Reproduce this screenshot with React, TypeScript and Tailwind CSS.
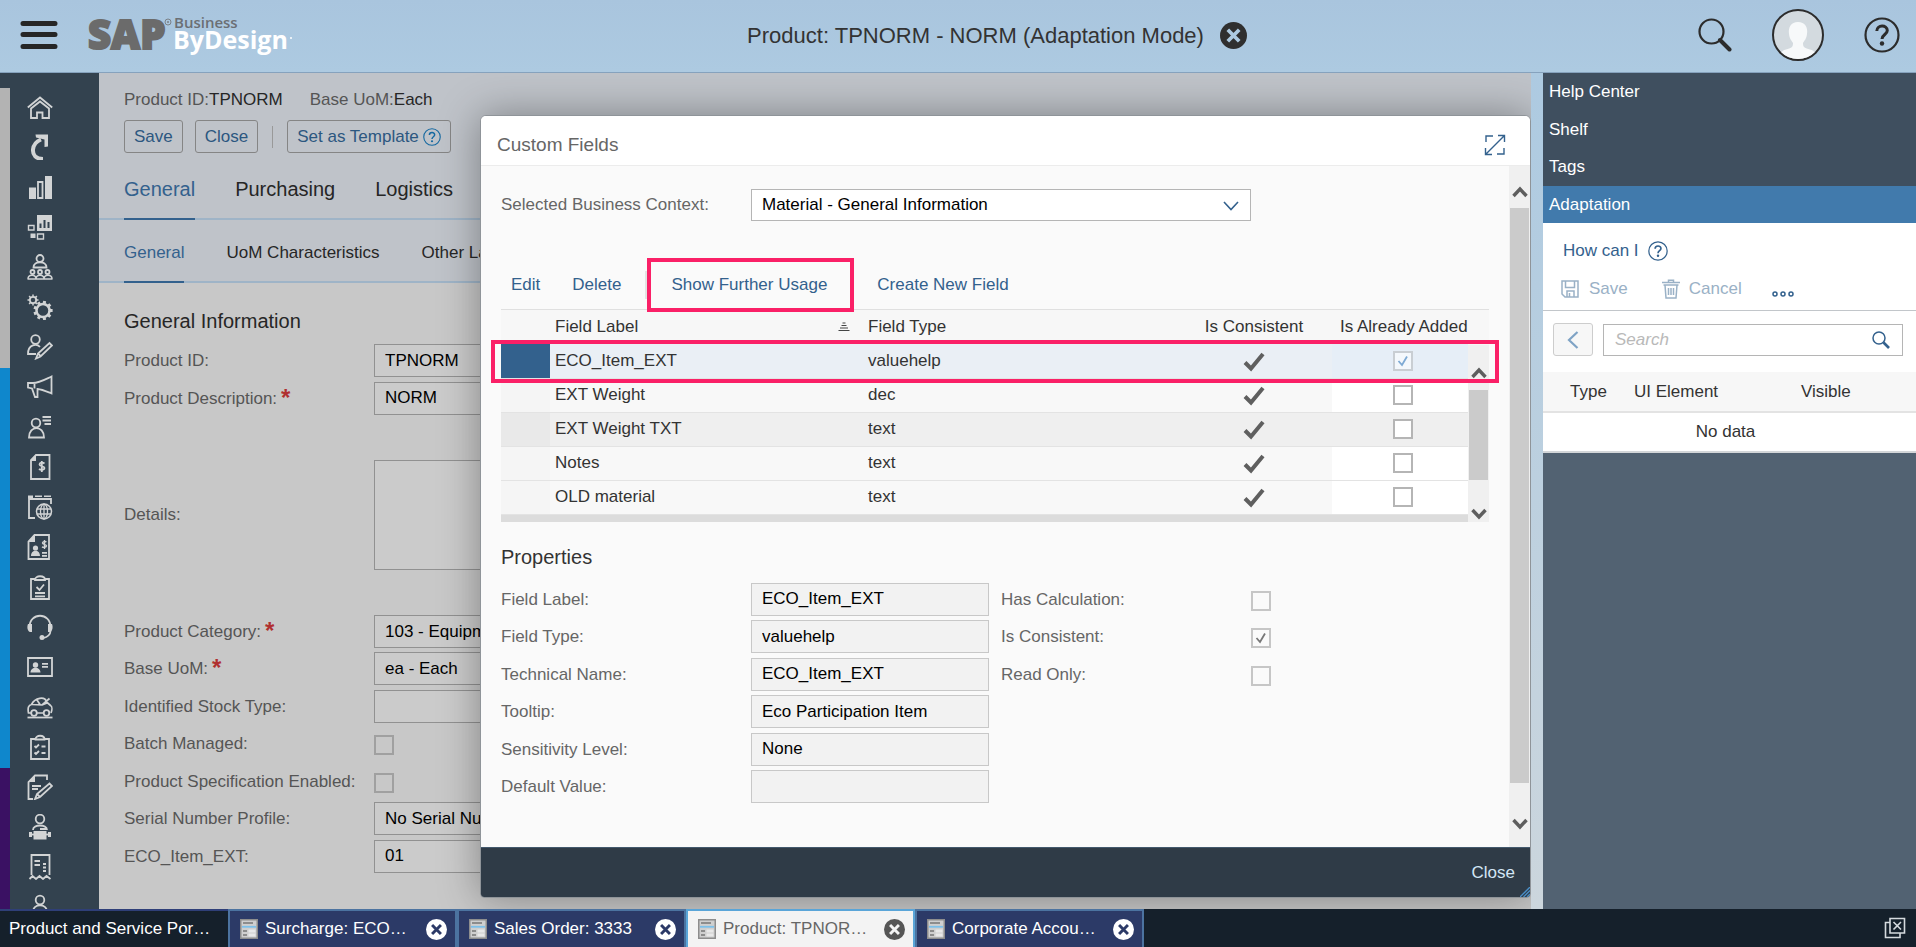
import React from "react";

type IconProps = { children: React.ReactNode; className?: string; box?: string };

function Svg({ children, className = "", box = "0 0 26 26" }: IconProps) {
  return (
    <svg viewBox={box} className={className} fill="none" stroke="currentColor" strokeWidth={1.8} aria-hidden="true">
      {children}
    </svg>
  );
}

const F = { fill: "currentColor", stroke: "none" };

const gear = (cx: number, cy: number, r: number, n: number, tooth: number) =>
  Array.from({ length: n }, (_, i) => {
    const a = (i * 2 * Math.PI) / n;
    return `M${cx + Math.cos(a) * r} ${cy + Math.sin(a) * r}L${cx + Math.cos(a) * (r + tooth)} ${cy + Math.sin(a) * (r + tooth)}`;
  }).join("");

const railIcons: { name: string; art: React.ReactNode }[] = [
  { name: "Home", art: <><path d="M.8 13.5 13 3.5l12.2 10" /><path d="M4 14.5V24h6v-5.5h5.500V24H22v-9.500L13 7.500Z" /></> },
  { name: "Recent", art: <><path d="M16 25C9 25 5.500 21 6 15.500 6.500 11 9 7.500 14 5.500" strokeWidth={4} /><path d="M8.500.500H21v12l-3.500.500V5.500L9 3.500Z" {...F} /></> },
  { name: "Analysis", art: <><path d="M2 13.500h7V25H2ZM18 2h7v23h-7Z" {...F} /><path d="M11 8h4.500v16H11Z" /></> },
  { name: "Dashboards", art: <><path fillRule="evenodd" d="M10 1h15v16H10ZM12.500 9.500v4.500h2V9.500ZM16.500 6v8h2V6ZM20.500 8v6h2V8Z" {...F} /><path d="M1.500 11.500h5.500v4.500H1.500ZM10.500 20h6v5h-6Z" strokeWidth={1.400} /><path d="M3.500 19.500h5v4.500h-5Z" {...F} /></> },
  { name: "Team", art: <><circle cx="13" cy="4.500" r="3.500" /><path d="M6.500 13.500c0-7 13-7 13 0Z" /><circle cx="5.500" cy="18" r="2" /><circle cx="13" cy="18" r="2" /><circle cx="20.500" cy="18" r="2" /><path d="M1 25c0-5 8-5 8 0M9 25c0-5 8-5 8 0M17 25c0-5 8-5 8 0M.500 25h25" strokeWidth={1.500} /></> },
  { name: "Settings", art: <><circle cx="16" cy="16.500" r="6.500" strokeWidth={2.500} /><path d={gear(16, 16.5, 7, 9, 2.6)} strokeWidth={3} /><circle cx="6" cy="6" r="3.200" /><path d={gear(6, 6, 3.5, 8, 2)} strokeWidth={1.500} /></> },
  { name: "Administration", art: <><circle cx="8.500" cy="5.500" r="4.300" /><path d="M13 13c-3-3.500-12-3-12 7h8" /><path d="m9 24.500 2-5L22.500 9l2.500 2.500-11.500 11ZM11 19.500l3 3" /></> },
  { name: "Marketing", art: <path d="M1 9h5c6 0 12-3.500 18.500-6.500v17c-5-2-9-4-14-4.500V23H8L5 14.500 1 13.500ZM7.500 9v5.500" /> },
  { name: "Contacts", art: <><circle cx="9" cy="9" r="4.300" /><path d="M2 23.500c0-12.500 15-12.500 15 0Z" /><path d="M15.500 3H24M15.500 6.500H24M17.500 10H24" /></> },
  { name: "Sales", art: <><path d="M9 1h13.500v24H4V6Z" /><path d="M9 .500V7H3.500Z" {...F} /><path d="M17.500 9.500c-2-1.500-5-1-5 1s5 1.500 5 3.500-3.500 2.500-5.500 1M14.800 7v11" /></> },
  { name: "Web Orders", art: <><path d="M8 24H2V5h22v5" /><path d="M1 1.500h5v3H1ZM8 1.500h7v1.500H8ZM17 1.500h7v1.500h-7Z" {...F} /><circle cx="17" cy="17.500" r="7.500" strokeWidth={1.500} /><ellipse cx="17" cy="17.500" rx="3.500" ry="7.500" strokeWidth={1.300} /><path d="M10 15h14M10 20h14M17 10v15" strokeWidth={1.300} /></> },
  { name: "Accounts", art: <><path d="M7.500 1H22v24H1.500V7.500Z" /><path d="M8 .500V8H1Z" {...F} /><circle cx="8.500" cy="14" r="2.600" {...F} /><path d="M4 22c0-7 9-7 9 0ZM15 18h5v1.800h-5ZM15 21h5v1.800h-5Z" {...F} /><path d="M19.500 8c-1.500-1-4-.500-4 1s4 1.200 4 2.800-3 2-4.500 1M17.500 6v9" strokeWidth={1.400} /></> },
  { name: "Tasks", art: <><path d="M9 5H4v20h18V5h-5" /><path d="M8 6c0-5 10-5 10 0Z" /><path d="m9.500 13 3 3 4.500-5.500M8 19h10M8 22.300h10" /></> },
  { name: "Service Desk", art: <><path d="M2.500 13C2.500-2 23.500-2 23.500 13v4c0 3-3 6-7 7" /><path d="M1 10h4v8H3c-3-1-3-6-2-8ZM21 10h4c1 2 1 7-2 8h-2Z" {...F} /><circle cx="15" cy="23.500" r="2.500" {...F} /></> },
  { name: "Employees", art: <><path d="M1 4h24v18H1Z" /><circle cx="8.500" cy="11" r="2.700" {...F} /><path d="M3.500 18.500c0-6.500 10-6.500 10 0ZM15 9h6v1.800h-6ZM15 12h6v1.800h-6Z" {...F} /></> },
  { name: "Vehicles", art: <><path d="M4 19H1.500c-1-5 0-8 3-8.500C8 3.500 18 2 19.500 8l4 3.500c2 1 1.500 5 .500 7.500M10 19h6.500M5 10.500l10 .500 7.500-6.500M10 6l3 4.500M15 11l5-2" strokeWidth={1.700} /><circle cx="7" cy="19" r="2.800" /><circle cx="19.500" cy="19" r="2.800" /><path d="M.500 23.500h25" /></> },
  { name: "Checklist", art: <><path d="M9 5H4v20h18V5h-5" /><path d="M8.500 5.500c0-5 9-5 9 0Z" /><path d="m7.500 12 1.500 1.500 3-3M7.500 18.500 9 20l3-3M14.500 12.500h4M14.500 19h4" /></> },
  { name: "Contracts", art: <><path d="M6 25H1.500V8l6.500-6.500h12V6" /><path d="M8 1v7H1Z" {...F} /><path d="M5 12h9M5 15h6" /><path d="m8 25 2-5L22.500 9.500 25 12 13 23ZM10 20l3 3" /></> },
  { name: "Speaker", art: <><circle cx="13" cy="5" r="4.300" /><path d="M6 16c0-6 14-6 14 0M13 15h7" /><path d="M6.500 17h13v8.500h-13ZM2 18h3v5H2ZM21 18h3v5h-3Z" {...F} /><path d="M3 20.500h20" /></> },
  { name: "Receipts", art: <><path d="M4.500 21V1h18v20" /><path d="m2.500 25 3-3 3.500 3 3.500-3 3.500 3 3.500-3 4 3" /><path d="M7.500 7H13M7.500 11H13M16 10h3M16 13.500h3M16 17h3" /></> },
  { name: "Personal", art: <><circle cx="13" cy="6" r="4.300" /><path d="M6 18c0-9 14-9 14 0Z" /></> },
];

function HelpGlyph({ className = "" }: { className?: string }) {
  return (
    <svg viewBox="0 0 36 36" className={className} fill="none" stroke="currentColor" strokeWidth={2.2} aria-hidden="true">
      <circle cx="18" cy="18" r="16.500" />
      <path d="M12.800 14c0-6.500 10.500-6.500 10.500-.500 0 4-5.300 4-5.300 8.500" strokeWidth={3} />
      <circle cx="18" cy="26.500" r="2.200" {...F} />
    </svg>
  );
}

function CloseGlyph({ className = "", cross }: { className?: string; cross: string }) {
  return (
    <svg viewBox="0 0 26 26" className={className} aria-hidden="true">
      <circle cx="13" cy="13" r="13" fill="currentColor" />
      <path d="m7.500 7.500 11 11M18.500 7.500l-11 11" stroke={cross} strokeWidth={3.6} />
    </svg>
  );
}

function Chevron({ up = false }: { up?: boolean }) {
  return (
    <svg viewBox="0 0 16 12" className="h-3 w-4" fill="none" stroke="#5e5e5e" strokeWidth={3.4} aria-hidden="true">
      <path d={up ? "M1.500 10 8 3l6.500 7" : "M1.500 2 8 9l6.500-7"} />
    </svg>
  );
}

function Check({ id, label, checked = false, tone, mark = "#777" }: { id?: string; label?: string; checked?: boolean; tone: string; mark?: string }) {
  return (
    <span className="inline-grid size-5 place-items-center align-middle">
      <input id={id} aria-label={label} type="checkbox" defaultChecked={checked} className={"col-start-1 row-start-1 size-5 appearance-none border-2 " + tone} />
      {checked && (
        <svg viewBox="0 0 12 12" className="pointer-events-none col-start-1 row-start-1 size-3" fill="none" stroke={mark} strokeWidth={1.8} aria-hidden="true">
          <path d="m1.500 6 3.500 4 5-8.500" />
        </svg>
      )}
    </span>
  );
}

function Header() {
  return (
    <header className="flex h-[73px] shrink-0 items-center border-b border-[#86a2bd] bg-linear-to-b from-[#a9c5de] to-[#adcae1] pr-4 pb-0.5 pl-5">
      <button aria-label="Menu" className="mr-[30px]">
        <svg viewBox="0 0 38 28" className="h-7 w-[38px]" stroke="#262626" strokeWidth={5} strokeLinecap="round">
          <path d="M3 2.500h32M3 13.500h32M3 25.500h32" />
        </svg>
      </button>
      <svg viewBox="0 0 208 44" className="h-11 w-[208px] overflow-visible" role="img" aria-label="SAP Business ByDesign">
        <text x="0" y="36" fontFamily="Open Sans" fontWeight="800" fontSize="40" fill="#6b6b6b" stroke="#6b6b6b" strokeWidth="2">SAP</text>
        <circle cx="80" cy="9" r="3" fill="none" stroke="#7b8187" />
        <circle cx="80" cy="9" r="1" fill="#7b8187" />
        <text x="86" y="15" fontFamily="Open Sans" fontWeight="600" fontSize="15" fill="#6b6f74">Business</text>
        <text x="85" y="36" fontFamily="Open Sans" fontWeight="700" fontSize="25" fill="#fff">ByDesign</text>
        <circle cx="203" cy="25" r="1" fill="#fff" />
      </svg>
      <div className="flex flex-1 items-center justify-center gap-4">
        <h1 className="text-[22px] text-[#333]">Product: TPNORM - NORM (Adaptation Mode)</h1>
        <button aria-label="Leave adaptation mode"><CloseGlyph className="size-[27px] text-[#2f2f2f]" cross="#adcae1" /></button>
      </div>
      <div className="flex items-center gap-10">
        <button aria-label="Search">
          <svg viewBox="0 0 34 34" className="size-[34px]" fill="none" stroke="#2c2c2c" aria-hidden="true">
            <circle cx="13.500" cy="13.500" r="12" strokeWidth={2.200} />
            <path d="m22 22 9.500 9.500" strokeWidth={4} strokeLinecap="round" />
          </svg>
        </button>
        <button aria-label="User" className="size-[52px] overflow-hidden rounded-full border-2 border-[#2c2c2c] bg-[#d3dadf]">
          <svg viewBox="0 0 48 48" fill="#f7f9fa" aria-hidden="true">
            <path d="M24 11c7 0 10 5 9 12-.500 5-3 7-4 9 0 5 2 5 7 6.500 5 1.500 6 4 7 9.500H5c1-5.500 2-8 7-9.500 5-1.500 7-1.500 7-6.500-1-2-3.500-4-4-9-1-7 2-12 9-12Z" />
          </svg>
        </button>
        <button aria-label="Help"><HelpGlyph className="size-9 text-[#2c2c2c]" /></button>
      </div>
    </header>
  );
}

function Rail() {
  return (
    <nav aria-label="Work centers" className="flex w-[99px] shrink-0 overflow-hidden bg-[#33424f]">
      <div className="flex w-[10px] flex-col pt-[15px]">
        <div className="h-[280px] bg-[#b3b3b3]" />
        <div className="h-[400px] bg-[#0f87cc]" />
        <div className="flex-1 bg-[#3a1163]" />
      </div>
      <ul className="h-0 flex-1 pt-[14px] pl-[17px] text-[#d2d4d5]">
        {railIcons.map((icon) => (
          <li key={icon.name} className="flex h-10 items-center">
            <a href="#" aria-label={icon.name}><Svg className="size-[26px]">{icon.art}</Svg></a>
          </li>
        ))}
      </ul>
    </nav>
  );
}

type FormField = { id: string; label: string; value?: string; required?: boolean; kind?: "check" };

function FormRow({ field }: { field: FormField }) {
  return (
    <div className="flex items-start">
      <label htmlFor={field.id} className="flex w-[250px] pt-1 text-[#555]">
        {field.label}
        {field.required && <span className="h-6 pl-1 text-2xl leading-6 font-bold text-[#b03030]">*</span>}
      </label>
      {field.kind === "check" ? (
        <span className="pt-2 leading-none"><Check id={field.id} tone="border-[#a0a0a0]" /></span>
      ) : (
        <input id={field.id} defaultValue={field.value} className="h-[33px] w-[440px] border border-[#919191] bg-[#cbcbcb] px-[10px] text-black" />
      )}
    </div>
  );
}

const topFields: FormField[] = [
  { id: "pid", label: "Product ID:", value: "TPNORM" },
  { id: "pdesc", label: "Product Description:", value: "NORM", required: true },
];

const lowerFields: FormField[] = [
  { id: "cat", label: "Product Category:", value: "103 - Equipment", required: true },
  { id: "uom", label: "Base UoM:", value: "ea - Each", required: true },
  { id: "stock", label: "Identified Stock Type:", value: "" },
  { id: "batch", label: "Batch Managed:", kind: "check" },
  { id: "spec", label: "Product Specification Enabled:", kind: "check" },
  { id: "serial", label: "Serial Number Profile:", value: "No Serial Number" },
  { id: "eco", label: "ECO_Item_EXT:", value: "01" },
];

function ProductPage() {
  const button = "flex h-[33px] items-center rounded-[3px] border border-[#858585] px-[9px] text-[#2c5780]";
  return (
    <div className="h-0 min-h-full">
      <div className="bg-[#bfc3c9] pt-3">
        <div className="flex gap-[27px] px-[25px] pt-px leading-7 text-[#555]">
          <span>Product ID:<span className="text-[#262626]">TPNORM</span></span>
          <span>Base UoM:<span className="text-[#262626]">Each</span></span>
        </div>
        <div className="mt-1.5 flex items-center px-[25px]">
          <button className={button}>Save</button>
          <button className={button + " ml-3"}>Close</button>
          <span className="mx-[14px] h-[22px] w-px bg-[#999]" />
          <button className={button}>Set as Template<HelpGlyph className="ml-1 size-[18px] text-[#1468a0]" /></button>
        </div>
        <div className="mt-5 flex h-[47px] gap-10 border-b-2 border-[#9fb4c7] px-[25px] text-xl leading-8 text-[#262626]">
          <a href="#" className="-mb-0.5 border-b-2 border-[#33618d] text-[#33618d]">General</a>
          <a href="#">Purchasing</a>
          <a href="#">Logistics</a>
        </div>
        <div className="flex h-[63px] gap-[42px] border-b-2 border-[#9fb4c7] px-[25px] pt-[17px] leading-8 text-[#262626]">
          <a href="#" className="-mb-0.5 border-b-2 border-[#33618d] text-[#33618d]">General</a>
          <a href="#">UoM Characteristics</a>
          <a href="#">Other Languages</a>
        </div>
      </div>
      <div className="px-[25px] pt-6">
        <h2 className="text-xl leading-7 text-[#262626]">General Information</h2>
        <div className="mt-[9px] grid h-[75px] grid-rows-2">
          {topFields.map((f) => <FormRow key={f.id} field={f} />)}
        </div>
        <div className="mt-[41px] flex items-center">
          <label htmlFor="details" className="w-[250px] text-[#555]">Details:</label>
          <textarea id="details" className="h-[110px] w-[440px] resize-none border border-[#919191] bg-[#cbcbcb]" />
        </div>
        <div className="mt-[45px] grid h-[262px] grid-rows-7">
          {lowerFields.map((f) => <FormRow key={f.id} field={f} />)}
        </div>
      </div>
    </div>
  );
}

const rows = [
  { label: "ECO_Item_EXT", type: "valuehelp", added: true },
  { label: "EXT Weight", type: "dec", added: false },
  { label: "EXT Weight TXT", type: "text", added: false },
  { label: "Notes", type: "text", added: false },
  { label: "OLD material", type: "text", added: false },
];

const rowTone = ["bg-[#eaeff5]", "bg-[#f8f8f8]", "bg-[#efefef]", "bg-[#f8f8f8]", "bg-[#f8f8f8]"];
const addedTone = ["bg-[#e6eef7]", "bg-white", "bg-[#efefef]", "bg-white", "bg-white"];
const selectorTone = ["bg-[#33618d]", "bg-[#f5f5f5]", "bg-[#e9e9e9]", "bg-[#f5f5f5]", "bg-[#f5f5f5]"];

function FieldTable() {
  return (
    <div className="relative flex border-t border-[#e0e0e0] bg-[#f7f7f7] text-[#333]">
      <div className="flex-1">
        <table className="w-full table-fixed border-collapse text-left whitespace-nowrap">
          <thead>
            <tr className="h-[34px]">
              <th className="w-[49px]" aria-label="Selection" />
              <th className="w-[313px] px-[5px] font-normal">
                <span className="flex items-center justify-between pr-2">
                  Field Label
                  <svg viewBox="0 0 12 10" className="h-[10px] w-3" stroke="#444" strokeWidth={1.2} aria-hidden="true">
                    <path d="M4.500 1h3M3.500 3.500h5M2 6h8M.500 8.500h11" />
                  </svg>
                </span>
              </th>
              <th className="px-[5px] font-normal">Field Type</th>
              <th className="w-[156px] text-center font-normal">Is Consistent</th>
              <th className="w-[136px] pl-2 font-normal">Is Already Added</th>
            </tr>
          </thead>
          <tbody>
            {rows.map((r, i) => (
              <tr key={r.label} className={"h-[34px] border-b border-[#e3e3e3] " + rowTone[i]}>
                <td className={selectorTone[i]} />
                <td className="px-[5px]">{r.label}</td>
                <td className="px-[5px]">{r.type}</td>
                <td className="text-center">
                  <svg viewBox="0 0 22 20" className="inline h-5 w-[22px]" fill="none" stroke="#5f5f5f" strokeWidth={4} role="img" aria-label="Yes">
                    <path d="m2 10.500 6 6L20 2" />
                  </svg>
                </td>
                <td className={"pl-1.5 text-center leading-none " + addedTone[i]}>
                  <Check label={r.label + " already added"} checked={r.added} tone={r.added ? "border-[#c9ced3] bg-[#f4f8fc]" : "border-[#b5b5b5] bg-white"} mark="#7eaad4" />
                </td>
              </tr>
            ))}
          </tbody>
        </table>
        <div className="h-[7px] bg-[#dcdcdc]" />
      </div>
      <div className="mt-[35px] flex w-[21px] flex-col items-center bg-[#f0f0f0] pt-[22px] pb-0.5">
        <Chevron up />
        <div className="mt-[11px] h-[90px] w-[19px] bg-[#cbcbcb]" />
        <div className="flex-1" />
        <Chevron />
      </div>
      <div className="pointer-events-none absolute -inset-x-[10px] top-[30px] h-[43px] border-4 border-[#fa2067]" />
    </div>
  );
}

const properties = [
  { id: "p1", label: "Field Label:", value: "ECO_Item_EXT" },
  { id: "p2", label: "Field Type:", value: "valuehelp" },
  { id: "p3", label: "Technical Name:", value: "ECO_Item_EXT" },
  { id: "p4", label: "Tooltip:", value: "Eco Participation Item" },
  { id: "p5", label: "Sensitivity Level:", value: "None" },
  { id: "p6", label: "Default Value:", value: "" },
];

const flags = [
  { id: "f1", label: "Has Calculation:", checked: false },
  { id: "f2", label: "Is Consistent:", checked: true },
  { id: "f3", label: "Read Only:", checked: false },
];

function CustomFieldsDialog() {
  return (
    <section role="dialog" aria-label="Custom Fields" className="absolute top-[42px] right-0 bottom-[11px] left-[381px] flex flex-col overflow-hidden rounded-t-md rounded-b-sm border border-[#8f9499] bg-[#fafafa] shadow-[0_0_40px_rgba(0,0,0,0.35)]">
      <header className="flex h-[50px] shrink-0 items-center justify-between border-b border-[#ececec] bg-white pr-6 pl-4">
        <h2 className="pt-3 pb-1 text-[19px] leading-6 text-[#666]">Custom Fields</h2>
        <button aria-label="Maximize" className="pt-2 text-[#33618d]">
          <svg viewBox="0 0 22 22" className="size-[22px]" fill="none" stroke="currentColor" strokeWidth={1.4} aria-hidden="true">
            <path d="M2 8V2h7M20 14v6h-7M1.500 20.500l19-19M14 1.500h6.500V8M1.500 14v6.500H8" />
          </svg>
        </button>
      </header>
      <div className="flex min-h-0 flex-1">
        <div className="h-0 flex-1 px-5 pt-[23px]">
          <div className="flex items-center">
            <label htmlFor="ctx" className="w-[250px] text-[#666]">Selected Business Context:</label>
            <div className="relative">
              <select id="ctx" className="h-8 w-[500px] appearance-none border border-[#b5b5b5] bg-white px-[10px] text-black">
                <option>Material - General Information</option>
              </select>
              <svg viewBox="0 0 16 10" className="pointer-events-none absolute top-3 right-3 h-[10px] w-4" fill="none" stroke="#33618d" strokeWidth={1.6} aria-hidden="true">
                <path d="m1 1 7 7.500L15 1" />
              </svg>
            </div>
          </div>
          <div className="mt-10 flex h-12 items-center px-[10px] text-[#33618d]">
            <button>Edit</button>
            <button className="ml-8">Delete</button>
            <div className="relative ml-6 flex border-l-2 border-[#e3e3e3] py-px pl-6">
              <button>Show Further Usage</button>
              <div className="pointer-events-none absolute -top-[13px] left-0 z-10 h-[54px] w-[207px] border-4 border-[#fa2067]" />
            </div>
            <button className="ml-[50px]">Create New Field</button>
          </div>
          <FieldTable />
          <h3 className="mt-[21px] text-xl leading-7 text-[#333]">Properties</h3>
          <div className="mt-3 flex">
            <div className="grid h-[225px] grid-rows-6">
              {properties.map((p) => (
                <div key={p.id} className="flex items-start">
                  <label htmlFor={p.id} className="w-[250px] pt-1 text-[#666]">{p.label}</label>
                  <input id={p.id} readOnly value={p.value} className="h-[33px] w-[238px] border border-[#c8c8c8] bg-[#f2f2f2] px-[10px] text-black" />
                </div>
              ))}
            </div>
            <div className="ml-3 grid h-[113px] grid-rows-3">
              {flags.map((f) => (
                <div key={f.id} className="flex items-start">
                  <label htmlFor={f.id} className="w-[250px] pt-1 text-[#666]">{f.label}</label>
                  <span className="pt-2 leading-none"><Check id={f.id} checked={f.checked} tone="border-[#c6c6c6]" /></span>
                </div>
              ))}
            </div>
          </div>
        </div>
        <div className="flex w-[21px] flex-col items-center bg-[#f0f0f0] pt-5 pb-[17px]">
          <Chevron up />
          <div className="mt-[10px] mb-[35px] w-[19px] flex-1 bg-[#cbcbcb]" />
          <Chevron />
        </div>
      </div>
      <footer className="relative flex h-[50px] shrink-0 items-center justify-end border-t border-[#43596d] bg-[#2f3b47] pr-[15px]">
        <button className="text-[#d3e6f5]">Close</button>
        <svg viewBox="0 0 10 10" className="absolute right-0 bottom-0 size-[10px]" stroke="#4a8fc8" strokeWidth={1.3} aria-hidden="true">
          <path d="M0 10 10 0M3.500 10 10 3.500M7 10l3-3" />
        </svg>
      </footer>
    </section>
  );
}

function SidePanel() {
  return (
    <aside className="w-[373px] shrink-0 bg-[#526272]">
      <ul className="grid h-[150px] grid-rows-4 text-white">
        {["Help Center", "Shelf", "Tags", "Adaptation"].map((t) => (
          <li key={t} className={"flex items-center px-1.5 " + (t === "Adaptation" ? "bg-[#417aac]" : "bg-[#3f4f5f]")}>
            <a href="#">{t}</a>
          </li>
        ))}
      </ul>
      <div className="border-b-2 border-[#d3d6d9] bg-white pt-4">
        <a href="#" className="flex items-center gap-[9px] pl-5 leading-6 text-[#33618d]">How can I <HelpGlyph className="size-5" /></a>
        <div className="mt-3 flex h-9 items-start border-b border-[#c2c6ca] pl-[18px] leading-7 text-[#9ab1c6]">
          <button className="flex items-center gap-[10px]">
            <svg viewBox="0 0 18 18" className="size-[18px]" fill="none" stroke="currentColor" strokeWidth={1.5} aria-hidden="true">
              <path d="M1 1h16v16H4l-3-3ZM4.500 1v6.500h9V1M6 17v-6h7v6M8.500 13v4" />
            </svg>
            Save
          </button>
          <button className="ml-[34px] flex items-center gap-[9px]">
            <svg viewBox="0 0 18 20" className="h-5 w-[18px]" fill="none" stroke="currentColor" strokeWidth={1.5} aria-hidden="true">
              <path d="M0 3.500h18M6.500 3V1.200h5V3M1.500 6h15M3 6l1 13h10l1-13M6.500 9v7M9 9v7M11.500 9v7" />
            </svg>
            Cancel
          </button>
          <button aria-label="More" className="ml-[30px] pt-4 text-[#33618d]">
            <svg viewBox="0 0 22 6" className="h-1.5 w-[22px]" fill="none" stroke="currentColor" strokeWidth={1.5}>
              <circle cx="3" cy="3" r="2" /><circle cx="11" cy="3" r="2" /><circle cx="19" cy="3" r="2" />
            </svg>
          </button>
        </div>
        <div className="flex items-center gap-[10px] py-3 pr-[13px] pl-[10px]">
          <button aria-label="Back" className="flex h-[33px] w-10 items-center justify-center rounded-[3px] border border-[#cdcdcd] bg-[#f7f7f7] text-[#7fa3c5]">
            <svg viewBox="0 0 12 18" className="h-[18px] w-3" fill="none" stroke="currentColor" strokeWidth={2.200} aria-hidden="true"><path d="M10.500 1 2 9l8.500 8" /></svg>
          </button>
          <div className="flex h-8 flex-1 items-center border border-[#b5b5b5] pr-3 pl-[11px]">
            <input aria-label="Search" placeholder="Search" className="w-full min-w-0 flex-1 placeholder:text-[#b9b9b9] placeholder:italic" />
            <svg viewBox="0 0 18 18" className="size-[18px] text-[#33618d]" fill="none" stroke="currentColor" strokeWidth={1.500} aria-hidden="true">
              <circle cx="7" cy="7" r="6" /><path d="m11.500 11.500 5.500 5.500" strokeWidth={2.600} />
            </svg>
          </div>
        </div>
        <table className="mt-1 w-full table-fixed text-left text-[#333]">
          <thead>
            <tr className="h-10 border-b-2 border-[#e3e3e3] bg-[#f7f7f7]">
              <th className="w-[91px] pl-[27px] font-normal">Type</th>
              <th className="font-normal">UI Element</th>
              <th className="w-[115px] font-normal">Visible</th>
            </tr>
          </thead>
          <tbody>
            <tr className="h-[39px]"><td colSpan={3} className="pr-2 text-center">No data</td></tr>
          </tbody>
        </table>
      </div>
    </aside>
  );
}

function DocIcon() {
  return (
    <svg viewBox="0 0 18 20" className="h-5 w-[18px] shrink-0" aria-hidden="true">
      <path d="M0 0h18v20H0Z" fill="#8d8d8d" />
      <path d="M1.500 1.500h15v17h-15Z" fill="#cfcfcf" />
      <path d="M3 4h10" stroke="#777" strokeWidth="1.500" />
      <path d="M2 7.800h14" stroke="#7cc0ea" strokeWidth="1.800" />
      <path d="M3 12h4M3 16h4" stroke="#777" strokeWidth="1.500" />
      <path d="M8.500 10.500h7v3h-7ZM8.500 14.500h7v3h-7Z" fill="#e8e8e8" />
    </svg>
  );
}

const tasks = [
  { title: "Surcharge: ECO…", active: false },
  { title: "Sales Order: 3333", active: false },
  { title: "Product: TPNOR…", active: true },
  { title: "Corporate Accou…", active: false },
];

function TaskBar() {
  return (
    <footer className="flex h-[38px] shrink-0 bg-[#15202b] text-white">
      <a href="#" className="flex w-[228px] items-center border-t-2 border-[#2f3f78] pl-[9px]">Product and Service Por…</a>
      {tasks.map((t) => (
        <div key={t.title} className={"flex w-[229px] items-center border-t-2 border-r-2 border-l-2 pr-2 pl-[10px] " + (t.active ? "border-[#5aa5d8] bg-[#f3f3f3] text-[#666]" : "border-[#4c73a0] bg-[#2c3a67]")}>
          <DocIcon />
          <a href="#" className="ml-[7px] flex-1 whitespace-nowrap">{t.title}</a>
          <button aria-label={"Close " + t.title}><CloseGlyph className={"size-[21px] " + (t.active ? "text-[#555]" : "text-white")} cross={t.active ? "#f3f3f3" : "#2c3a67"} /></button>
        </div>
      ))}
      <div className="flex flex-1 items-center justify-end pr-[10px]">
        <button aria-label="Close all">
          <svg viewBox="0 0 22 22" className="size-[22px]" fill="none" stroke="#d5dade" strokeWidth={1.6} aria-hidden="true">
            <path d="M6 1.500h14.500V16H6ZM6 5.500H1.500v15H16V16M9.500 5l7.500 7.500M17 5l-7.500 7.500" />
          </svg>
        </button>
      </div>
    </footer>
  );
}

export default function App() {
  return (
    <div className="flex h-screen flex-col overflow-hidden bg-[#b4cbdd] font-['Liberation_Sans',Arial,sans-serif] text-[17px]">
      <Header />
      <div className="flex min-h-0 flex-1 bg-linear-to-b from-[#adcae1] to-[#ccd6dd]">
        <Rail />
        <main className="relative mr-3 min-w-0 flex-1 overflow-hidden bg-[#c8c8c8]">
          <ProductPage />
          <CustomFieldsDialog />
        </main>
        <SidePanel />
      </div>
      <TaskBar />
    </div>
  );
}
